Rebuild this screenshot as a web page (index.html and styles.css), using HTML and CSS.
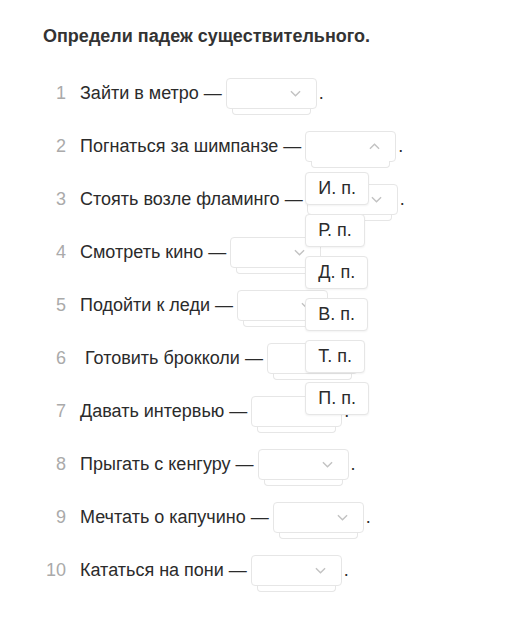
FILE: index.html
```html
<!DOCTYPE html>
<html lang="ru">

<head>
    <meta charset="UTF-8">
    <meta name="viewport" content="width=device-width, initial-scale=1.0">
    <title>Падежи</title>
    <link rel="stylesheet" href="styles.css">
</head>

<body>
    <div class="task">
        <h1 class="task-title">Определи падеж существительного.</h1>

        <ol class="items">
            <li class="item">
                <span class="num">1</span>
                <span class="phrase">Зайти в метро —</span>
                <span class="select"><svg class="chevron" viewBox="0 0 12 7"><polyline points="1,1 6,6 11,1" /></svg></span>
                <span class="dot">.</span>
            </li>
            <li class="item">
                <span class="num">2</span>
                <span class="phrase">Погнаться за шимпанзе —</span>
                <span class="select open"><svg class="chevron" viewBox="0 0 12 7"><polyline points="1,6 6,1 11,6" /></svg>
                    <span class="menu">
                        <span class="option">И. п.</span>
                        <span class="option">Р. п.</span>
                        <span class="option">Д. п.</span>
                        <span class="option">В. п.</span>
                        <span class="option">Т. п.</span>
                        <span class="option">П. п.</span>
                    </span>
                </span>
                <span class="dot">.</span>
            </li>
            <li class="item">
                <span class="num">3</span>
                <span class="phrase">Стоять возле фламинго —</span>
                <span class="select"><svg class="chevron" viewBox="0 0 12 7"><polyline points="1,1 6,6 11,1" /></svg></span>
                <span class="dot">.</span>
            </li>
            <li class="item">
                <span class="num">4</span>
                <span class="phrase">Смотреть кино —</span>
                <span class="select"><svg class="chevron" viewBox="0 0 12 7"><polyline points="1,1 6,6 11,1" /></svg></span>
                <span class="dot">.</span>
            </li>
            <li class="item">
                <span class="num">5</span>
                <span class="phrase">Подойти к леди —</span>
                <span class="select"><svg class="chevron" viewBox="0 0 12 7"><polyline points="1,1 6,6 11,1" /></svg></span>
                <span class="dot">.</span>
            </li>
            <li class="item">
                <span class="num">6</span>
                <span class="phrase">&nbsp;Готовить брокколи —</span>
                <span class="select"><svg class="chevron" viewBox="0 0 12 7"><polyline points="1,1 6,6 11,1" /></svg></span>
                <span class="dot">.</span>
            </li>
            <li class="item">
                <span class="num">7</span>
                <span class="phrase">Давать интервью —</span>
                <span class="select"><svg class="chevron" viewBox="0 0 12 7"><polyline points="1,1 6,6 11,1" /></svg></span>
                <span class="dot">.</span>
            </li>
            <li class="item">
                <span class="num">8</span>
                <span class="phrase">Прыгать с кенгуру —</span>
                <span class="select"><svg class="chevron" viewBox="0 0 12 7"><polyline points="1,1 6,6 11,1" /></svg></span>
                <span class="dot">.</span>
            </li>
            <li class="item">
                <span class="num">9</span>
                <span class="phrase">Мечтать о капучино —</span>
                <span class="select"><svg class="chevron" viewBox="0 0 12 7"><polyline points="1,1 6,6 11,1" /></svg></span>
                <span class="dot">.</span>
            </li>
            <li class="item">
                <span class="num">10</span>
                <span class="phrase">Кататься на пони —</span>
                <span class="select"><svg class="chevron" viewBox="0 0 12 7"><polyline points="1,1 6,6 11,1" /></svg></span>
                <span class="dot">.</span>
            </li>
        </ol>
    </div>
</body>

</html>
```

FILE: styles.css
```css
body {
    margin: 0;
    background-color: #fff;
    font-family: "Liberation Sans", Arial, sans-serif;
    color: #2b2b2b;
}

.task {
    padding: 25px 0 0 43px;
}

.task-title {
    font-size: 18px;
    font-weight: bold;
    line-height: 22px;
    margin: 0 0 20px 0;
    color: #333;
}

.items {
    list-style: none;
    margin: 0;
    padding: 0;
}

.item {
    display: flex;
    align-items: center;
    height: 53px;
    font-size: 18px;
}

.num {
    width: 23px;
    margin-right: 14px;
    text-align: right;
    color: #aaa;
}

.phrase {
    margin-right: 4px;
    white-space: nowrap;
}

.select {
    position: relative;
    display: flex;
    align-items: center;
    justify-content: flex-end;
    box-sizing: border-box;
    width: 91px;
    height: 31px;
    padding-right: 15px;
    background-color: #fff;
    border: 1px solid #e6e6e6;
    border-radius: 4px;
}

.select::after {
    content: "";
    position: absolute;
    left: 5px;
    right: 5px;
    bottom: -7px;
    height: 6px;
    border: 1px solid #e6e6e6;
    border-top: none;
    border-radius: 0 0 4px 4px;
    background-color: #fff;
    z-index: -1;
}

.select.open {
    z-index: 2;
}

.chevron {
    width: 11px;
    height: 7px;
    fill: none;
    stroke: #c2c2c2;
    stroke-width: 1.5;
}

.dot {
    margin-left: 2px;
}

.menu {
    position: absolute;
    top: 40px;
    left: -1px;
    display: flex;
    flex-direction: column;
    align-items: flex-start;
    gap: 9px;
}

.option {
    box-sizing: border-box;
    height: 33px;
    padding: 0 12px;
    display: flex;
    align-items: center;
    background-color: #fff;
    border: 1px solid #e6e6e6;
    border-radius: 4px;
    box-shadow: 0 1px 2px rgba(0, 0, 0, 0.05);
    white-space: nowrap;
}
```
